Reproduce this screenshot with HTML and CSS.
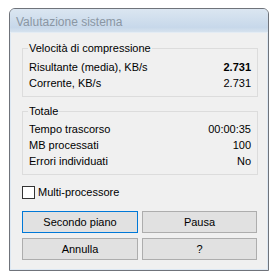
FILE: index.html
```html
<!DOCTYPE html>
<html>
<head>
<meta charset="utf-8">
<link rel="stylesheet" href="styles.css">
</head>
<body>
<div class="window">
  <div class="titlebar">Valutazione sistema</div>
  <div class="client">
    <fieldset class="group g1">
      <legend>Velocità di compressione</legend>
      <div class="row"><span>Risultante (media), KB/s</span><b>2.731</b></div>
      <div class="row"><span>Corrente, KB/s</span><span>2.731</span></div>
    </fieldset>
    <fieldset class="group g2">
      <legend>Totale</legend>
      <div class="row"><span>Tempo trascorso</span><span>00:00:35</span></div>
      <div class="row"><span>MB processati</span><span>100</span></div>
      <div class="row"><span>Errori individuati</span><span>No</span></div>
    </fieldset>
    <label class="check"><span class="box"></span><span>Multi-processore</span></label>
    <div class="buttons">
      <div class="btn focus">Secondo piano</div>
      <div class="btn">Pausa</div>
      <div class="btn">Annulla</div>
      <div class="btn">?</div>
    </div>
  </div>
</div>
</body>
</html>
```

FILE: styles.css
```css
html, body {
  margin: 0;
  padding: 0;
  background: #ffffff;
}
body {
  font-family: "Liberation Sans", Arial, sans-serif;
  font-size: 11px;
  color: #000;
}
.window {
  margin: 8px 0 0 9px;
  width: 260px;
  height: 263px;
  box-sizing: border-box;
  border: 1px solid #6f737a;
  border-radius: 6px 6px 0 0;
  background: #dde8f3;
  display: flex;
  flex-direction: column;
  overflow: hidden;
}
.titlebar {
  height: 23px;
  flex: none;
  background: linear-gradient(#dbe6f1, #c7d8ea 80%, #d6e2ee);
  color: #8a96a3;
  font-size: 12px;
  line-height: 26px;
  padding-left: 6px;
  border-bottom: 1px solid #e4ecf4;
}
.client {
  flex: 1;
  margin: 0 1px 1px 1px;
  background: #f0f0f0;
  padding: 7px 9px 0 11px;
  display: flex;
  flex-direction: column;
}
.group {
  margin: 0;
  border: 1px solid #dcdcdc;
  padding: 3px 6px 5px 6px;
  min-width: 0;
}
.group legend {
  padding: 0 1px;
  margin-left: -1px;
  line-height: 16px;
}
.g2 {
  margin-top: 6px;
  padding-top: 2px;
}
.row {
  display: flex;
  justify-content: space-between;
  line-height: 16px;
  height: 16px;
}
.row b {
  font-weight: bold;
}
.check {
  margin-top: 11px;
  display: flex;
  align-items: center;
  gap: 3px;
  height: 13px;
  line-height: 13px;
}
.box {
  width: 11px;
  height: 11px;
  border: 1px solid #333;
  background: #fff;
}
.buttons {
  margin-top: 12px;
  display: grid;
  grid-template-columns: 116px 115px;
  column-gap: 4px;
  row-gap: 5px;
}
.btn {
  height: 20px;
  line-height: 20px;
  text-align: center;
  background: #e1e1e1;
  border: 1px solid #adadad;
}
.btn.focus {
  border-color: #0078d7;
}
```
